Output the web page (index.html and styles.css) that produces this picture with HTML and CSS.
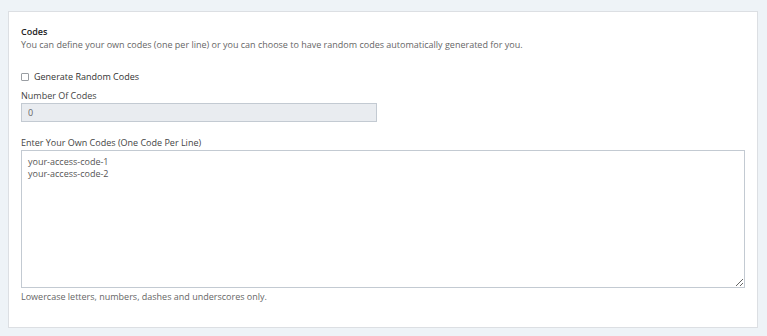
FILE: index.html
```html
<!DOCTYPE html>
<html>
<head>
<meta charset="utf-8">
<link rel="stylesheet" href="styles.css">
</head>
<body>
<div class="panel">
  <div class="title">Codes</div>
  <div class="desc">You can define your own codes (one per line) or you can choose to have random codes automatically generated for you.</div>
  <label class="check-row"><input type="checkbox" class="check"><span>Generate Random Codes</span></label>
  <div class="label label-first">Number Of Codes</div>
  <input class="num" type="text" value="0" disabled>
  <div class="label label-second">Enter Your Own Codes (One Code Per Line)</div>
  <textarea class="codes">your-access-code-1
your-access-code-2</textarea>
  <div class="help">Lowercase letters, numbers, dashes and underscores only.</div>
</div>
</body>
</html>
```
FILE: styles.css
```css
html, body {
  margin: 0;
  padding: 0;
}
body {
  background: #eef3f7;
  padding: 11px 9px 8px 8px;
  font-family: "Open Sans", "Liberation Sans", sans-serif;
  font-size: 9px;
  line-height: 13px;
  color: #333;
}
.panel {
  background: #fff;
  border: 1px solid #dcdfe3;
  padding: 13px 13px 24px 12px;
  display: flex;
  flex-direction: column;
  align-items: flex-start;
}
.title {
  font-weight: 600;
  color: #222;
}
.desc {
  color: #666;
}
.check-row {
  display: flex;
  align-items: center;
  gap: 5px;
  margin-top: 19px;
  color: #333;
}
.check {
  appearance: none;
  -webkit-appearance: none;
  width: 8px;
  height: 8px;
  margin: 0;
  border: 1px solid #9a9ea3;
  border-radius: 1px;
  background: #fff;
}
.label {
  color: #444;
}
.label-first { margin-top: 6px; }
.label-second { margin-top: 14px; }
.num {
  box-sizing: border-box;
  width: 356px;
  height: 19px;
  margin: 1px 0 0 0;
  padding: 0 6px;
  border: 1px solid #c3cad2;
  border-radius: 0;
  background: #e9ecf0;
  font-family: inherit;
  font-size: 9px;
  color: #666;
}
.codes {
  box-sizing: border-box;
  width: 724px;
  height: 138px;
  margin: 1px 0 0 0;
  padding: 5px 6px;
  border: 1px solid #c3cad2;
  border-radius: 0;
  font-family: inherit;
  font-size: 9px;
  line-height: 12px;
  color: #555;
  outline: none;
}
.help {
  margin-top: 2px;
  color: #666;
}
```
